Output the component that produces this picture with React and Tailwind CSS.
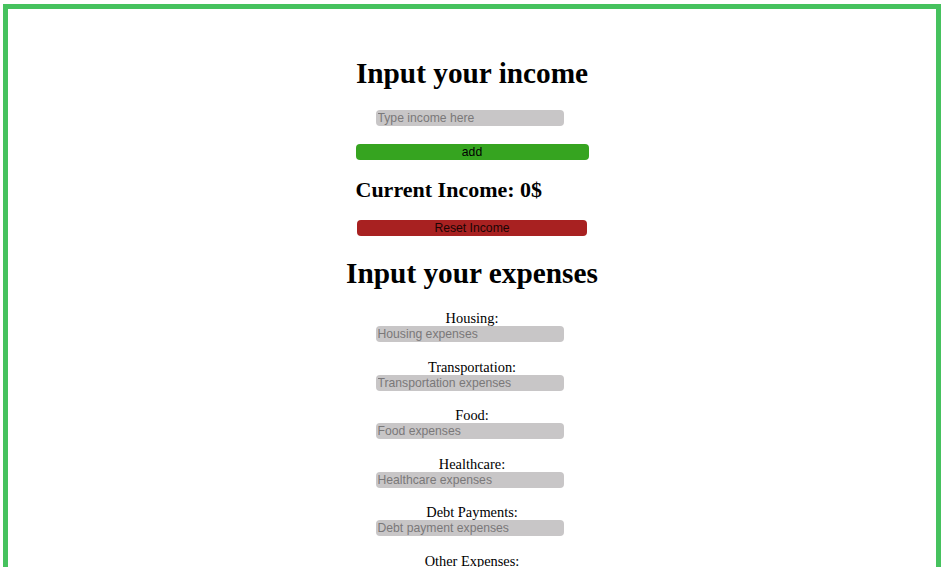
import { useState } from 'react';

const expenses = [
    { label: 'Housing:', placeholder: 'Housing expenses' },
    { label: 'Transportation:', placeholder: 'Transportation expenses' },
    { label: 'Food:', placeholder: 'Food expenses' },
    { label: 'Healthcare:', placeholder: 'Healthcare expenses' },
    { label: 'Debt Payments:', placeholder: 'Debt payment expenses' },
    { label: 'Other Expenses:', placeholder: 'Other expenses' },
];

const serif = "font-['Liberation_Serif','Times_New_Roman',serif]";
const sans = "font-['Liberation_Sans',Arial,sans-serif]";

export default function App() {
    const [income, setIncome] = useState(0);
    const [draft, setDraft] = useState('');

    const addIncome = () => {
        const n = parseFloat(draft);
        if (!isNaN(n)) setIncome(income + n);
        setDraft('');
    };

    return (
        <div className={`${serif} min-h-[700px] ml-[3px] mt-[4px] border-[5px] border-[#46c25e] bg-white text-black`}>
            <div className="flex flex-col items-center pt-[50px]">
                {/* Income */}
                <h1 className="text-[29.3px] leading-[29px] font-bold whitespace-nowrap">Input your income</h1>
                <input
                    value={draft}
                    onChange={(e) => setDraft(e.target.value)}
                    placeholder="Type income here"
                    className={`${sans} mt-[22px] mr-[5px] w-[188px] h-[16px] rounded-[4px] bg-[#c8c6c7] px-[2px] text-[12.2px] leading-[16px] text-black placeholder:text-[#7a7879] outline-none`}
                />
                <button
                    onClick={addIncome}
                    className={`${sans} mt-[18px] w-[233px] h-[16px] rounded-[4px] bg-[#36a420] text-[12.2px] leading-[16px] text-black`}
                >
                    add
                </button>
                <h2 className="mt-[19px] w-[233px] text-left text-[22px] leading-[22px] font-bold whitespace-nowrap">
                    Current Income: {income}$
                </h2>
                <button
                    onClick={() => setIncome(0)}
                    className={`${sans} mt-[19px] w-[230px] h-[16px] rounded-[4px] bg-[#a82121] text-[12.2px] leading-[16px] text-[#1a0505]`}
                >
                    Reset Income
                </button>

                {/* Expenses */}
                <h1 className="mt-[23px] text-[29.3px] leading-[29px] font-bold whitespace-nowrap">Input your expenses</h1>
                <div className="mt-[22px] flex flex-col items-center">
                    {expenses.map((item) => (
                        <div key={item.label} className="flex flex-col items-center mb-[16.5px]">
                            <label className="text-[14.4px] leading-[16px]">{item.label}</label>
                            <input
                                placeholder={item.placeholder}
                                className={`${sans} mr-[5px] w-[188px] h-[16px] rounded-[4px] bg-[#c8c6c7] px-[2px] text-[12.2px] leading-[16px] text-black placeholder:text-[#7a7879] outline-none`}
                            />
                        </div>
                    ))}
                </div>
            </div>
        </div>
    );
}
